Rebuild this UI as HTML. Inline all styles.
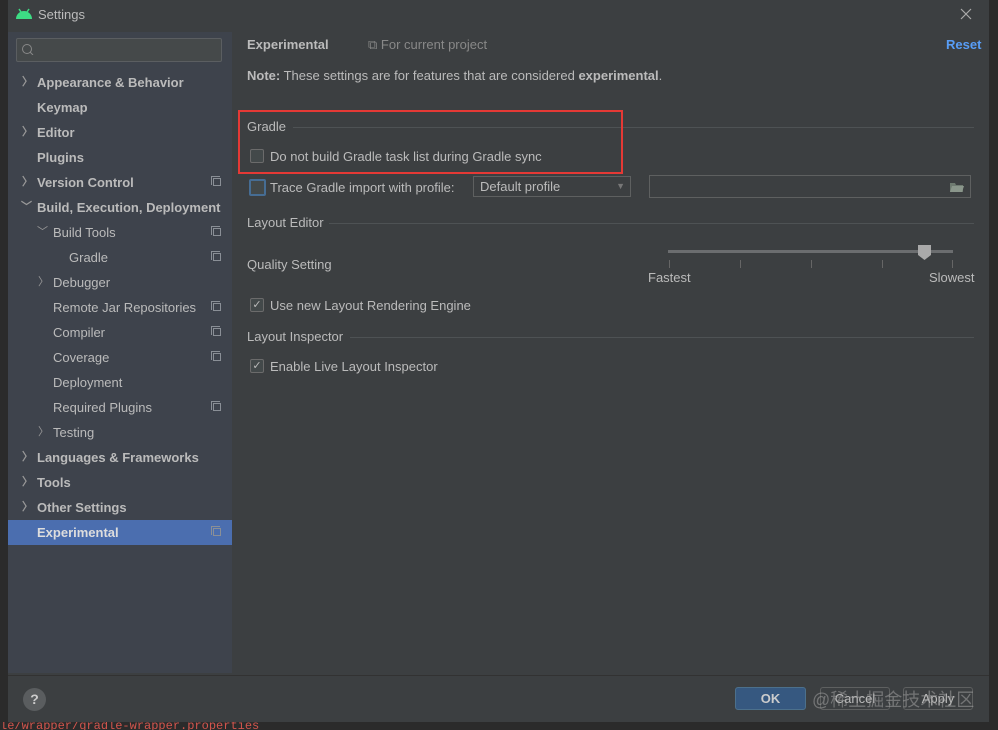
<!DOCTYPE html><html><head><meta charset="utf-8"><style>
body{margin:0;width:998px;height:730px;background:#2b2b2b;overflow:hidden;font-family:"Liberation Sans","DejaVu Sans",sans-serif;font-size:13px;color:#bbbbbb;position:relative}
.a{position:absolute}
.dlg{left:8px;top:0;width:981px;height:722px;background:#3c3f41}
.side{left:8px;top:32px;width:224px;height:641px;background:#3e434c}
.it{position:absolute;left:0;width:224px;height:25px;line-height:25px;white-space:nowrap}
.b{font-weight:bold}
.arr{position:absolute;font-size:11px;color:#999}
.ic{position:absolute;right:11px;top:8px;width:8px;height:8px;border:1px solid #8a8f96;box-sizing:border-box}
.ic:before{content:"";position:absolute;left:-3px;top:-3px;width:8px;height:8px;border-left:1px solid #8a8f96;border-top:1px solid #8a8f96}
.cb{position:absolute;width:12px;height:12px;border:1px solid #6b6b6b;border-radius:2px;background:#43494a}
</style></head><body>
<div class="a" style="left:0;top:0;width:8px;height:730px;background:#2b2b2b"></div>
<div class="a" style="left:0;top:722px;width:300px;height:8px;font-family:'Liberation Mono',monospace;font-size:12px;color:#d2554d;line-height:8px;overflow:hidden">le/wrapper/gradle-wrapper.properties</div>
<div class="a dlg"></div>
<svg class="a" style="left:15px;top:8px" width="18" height="12"><path d="M1 11 A8 8 0 0 1 17 11 Z" fill="#3ddc84"/><line x1="4" y1="1" x2="6" y2="4" stroke="#3ddc84" stroke-width="1.5"/><line x1="14" y1="1" x2="12" y2="4" stroke="#3ddc84" stroke-width="1.5"/></svg>
<div class="a" style="left:38px;top:7px;font-size:13px">Settings</div>
<svg class="a" style="left:960px;top:8px" width="12" height="12"><path d="M1 1L11 11M11 1L1 11" stroke="#aaa" stroke-width="1.2"/></svg>
<div class="a side"></div>
<div class="a" style="left:16px;top:38px;width:204px;height:22px;border:1px solid #5b5e61;border-radius:2px;background:#45494a"></div>
<svg class="a" style="left:21px;top:43px" width="16" height="12"><circle cx="6" cy="6" r="4.5" stroke="#888" fill="none"/><line x1="9" y1="9" x2="12" y2="12" stroke="#888"/></svg>
<div class="a" style="left:8px;top:70px;width:224px;height:600px">
<div class="it b" style="top:0"><span class="arr" style="left:14px">〉</span><span style="position:absolute;left:29px">Appearance &amp; Behavior</span></div>
<div class="it b" style="top:25px"><span style="position:absolute;left:29px">Keymap</span></div>
<div class="it b" style="top:50px"><span class="arr" style="left:14px">〉</span><span style="position:absolute;left:29px">Editor</span></div>
<div class="it b" style="top:75px"><span style="position:absolute;left:29px">Plugins</span></div>
<div class="it b" style="top:100px"><span class="arr" style="left:14px">〉</span><span style="position:absolute;left:29px">Version Control</span><i class="ic"></i></div>
<div class="it b" style="top:125px"><span class="arr" style="left:13px">﹀</span><span style="position:absolute;left:29px">Build, Execution, Deployment</span></div>
<div class="it" style="top:150px"><span class="arr" style="left:29px">﹀</span><span style="position:absolute;left:45px">Build Tools</span><i class="ic"></i></div>
<div class="it" style="top:175px"><span style="position:absolute;left:61px">Gradle</span><i class="ic"></i></div>
<div class="it" style="top:200px"><span class="arr" style="left:30px">〉</span><span style="position:absolute;left:45px">Debugger</span></div>
<div class="it" style="top:225px"><span style="position:absolute;left:45px">Remote Jar Repositories</span><i class="ic"></i></div>
<div class="it" style="top:250px"><span style="position:absolute;left:45px">Compiler</span><i class="ic"></i></div>
<div class="it" style="top:275px"><span style="position:absolute;left:45px">Coverage</span><i class="ic"></i></div>
<div class="it" style="top:300px"><span style="position:absolute;left:45px">Deployment</span></div>
<div class="it" style="top:325px"><span style="position:absolute;left:45px">Required Plugins</span><i class="ic"></i></div>
<div class="it" style="top:350px"><span class="arr" style="left:30px">〉</span><span style="position:absolute;left:45px">Testing</span></div>
<div class="it b" style="top:375px"><span class="arr" style="left:14px">〉</span><span style="position:absolute;left:29px">Languages &amp; Frameworks</span></div>
<div class="it b" style="top:400px"><span class="arr" style="left:14px">〉</span><span style="position:absolute;left:29px">Tools</span></div>
<div class="it b" style="top:425px"><span class="arr" style="left:14px">〉</span><span style="position:absolute;left:29px">Other Settings</span></div>
<div class="it b" style="top:450px;background:#4b6eaf;color:#ddd"><span style="position:absolute;left:29px">Experimental</span><i class="ic"></i></div>
</div>
<div class="a b" style="left:247px;top:37px">Experimental</div>
<div class="a" style="left:368px;top:37px;color:#888">⧉ For current project</div>
<div class="a b" style="left:946px;top:37px;color:#589df6">Reset</div>
<div class="a" style="left:247px;top:68px"><b>Note:</b> These settings are for features that are considered <b>experimental</b>.</div>
<div class="a" style="left:247px;top:119px">Gradle</div>
<div class="a" style="left:293px;top:127px;width:681px;height:1px;background:#4e5254"></div>
<div class="a" style="left:238px;top:110px;width:381px;height:60px;border:2px solid #e53935"></div>
<div class="cb" style="left:250px;top:149px"></div>
<div class="a" style="left:270px;top:149px">Do not build Gradle task list during Gradle sync</div>
<div class="cb" style="left:249px;top:179px;width:13px;height:13px;border:2px solid #466d94"></div>
<div class="a" style="left:270px;top:180px">Trace Gradle import with profile:</div>
<div class="a" style="left:473px;top:176px;width:158px;height:21px;border:1px solid #5e6060;background:#3c3f41;box-sizing:border-box;line-height:19px;padding-left:6px">Default profile<span style="position:absolute;right:5px;color:#777;font-size:9px">▼</span></div>
<div class="a" style="left:649px;top:175px;width:322px;height:23px;border:1px solid #5e6060;box-sizing:border-box"></div>
<svg class="a" style="left:949px;top:181px" width="16" height="12"><path d="M1 2h5l1 2h7v7H1z" fill="#6e7a70"/><path d="M3 5h12l-2 6H1z" fill="#8a968b"/></svg>
<div class="a" style="left:247px;top:215px">Layout Editor</div>
<div class="a" style="left:329px;top:223px;width:645px;height:1px;background:#4e5254"></div>
<div class="a" style="left:247px;top:257px">Quality Setting</div>
<div class="a" style="left:668px;top:250px;width:285px;height:3px;background:#6b6d6f"></div>
<svg class="a" style="left:917px;top:245px" width="15" height="16"><path d="M1 0h13v10l-6.5 5L1 10z" fill="#a9a9a9"/></svg>
<div class="a" style="left:669px;top:260px;width:1px;height:8px;background:#666"></div>
<div class="a" style="left:740px;top:260px;width:1px;height:8px;background:#666"></div>
<div class="a" style="left:811px;top:260px;width:1px;height:8px;background:#666"></div>
<div class="a" style="left:882px;top:260px;width:1px;height:8px;background:#666"></div>
<div class="a" style="left:952px;top:260px;width:1px;height:8px;background:#666"></div>
<div class="a" style="left:648px;top:270px">Fastest</div>
<div class="a" style="left:929px;top:270px">Slowest</div>
<div class="cb" style="left:250px;top:298px;text-align:center;line-height:12px;font-size:11px;color:#bbb">✓</div>
<div class="a" style="left:270px;top:298px">Use new Layout Rendering Engine</div>
<div class="a" style="left:247px;top:329px">Layout Inspector</div>
<div class="a" style="left:350px;top:337px;width:624px;height:1px;background:#4e5254"></div>
<div class="cb" style="left:250px;top:359px;text-align:center;line-height:12px;font-size:11px;color:#bbb">✓</div>
<div class="a" style="left:270px;top:359px">Enable Live Layout Inspector</div>
<div class="a" style="left:8px;top:675px;width:981px;height:1px;background:#323232"></div>
<div class="a" style="left:23px;top:688px;width:23px;height:23px;border-radius:50%;background:#5a5d5f;color:#ccc;text-align:center;line-height:23px;font-weight:bold;font-size:14px">?</div>
<div class="a b" style="left:735px;top:687px;width:71px;height:23px;background:#365880;border:1px solid #4c708c;border-radius:3px;box-sizing:border-box;text-align:center;line-height:21px;color:#ccc">OK</div>
<div class="a" style="left:820px;top:687px;width:70px;height:23px;border:1px solid #5e6060;border-radius:3px;box-sizing:border-box;text-align:center;line-height:21px">Cancel</div>
<div class="a" style="left:903px;top:687px;width:70px;height:23px;border:1px solid #5e6060;border-radius:3px;box-sizing:border-box;text-align:center;line-height:21px">Apply</div>
<div class="a" style="left:812px;top:686px;font-size:18px;color:rgba(170,170,170,0.5);font-family:'Liberation Sans','Noto Sans CJK SC',sans-serif">@稀土掘金技术社区</div>
</body></html>
